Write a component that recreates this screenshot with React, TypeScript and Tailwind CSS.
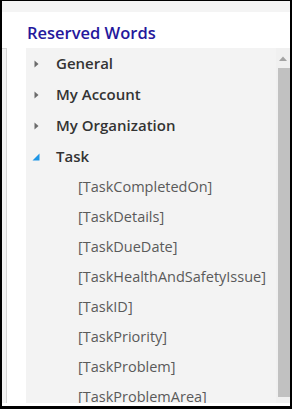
import React from 'react';

const groups = ['General', 'My Account', 'My Organization'];
const words = [
  '[TaskCompletedOn]',
  '[TaskDetails]',
  '[TaskDueDate]',
  '[TaskHealthAndSafetyIssue]',
  '[TaskID]',
  '[TaskPriority]',
  '[TaskProblem]',
  '[TaskProblemArea]',
];

const Collapsed = () => (
  <svg width="5" height="8" viewBox="0 0 5 8" className="shrink-0">
    <path d="M0.5 0.5 L4.5 4 L0.5 7.5 Z" fill="#6b6b6b" />
  </svg>
);

const Expanded = () => (
  <svg width="8" height="8" viewBox="0 0 8 8" className="shrink-0">
    <path d="M7.5 0.5 L7.5 7.5 L0.5 7.5 Z" fill="#1e96e6" />
  </svg>
);

export default function App() {
  return (
    <div
      className="w-[292px] h-[409px] bg-black pt-[1px] pl-[2px] pr-[2px] pb-[3px] overflow-hidden"
      style={{ fontFamily: '"Open Sans", "Noto Sans", sans-serif' }}
    >
      <div className="h-full bg-white flex flex-col overflow-hidden">
        <div className="h-[11px] bg-[#f4f4f4] shrink-0" />
        <div className="flex flex-1 min-h-0">
          <div className="w-[5px] shrink-0 flex flex-col">
            <div className="h-[36px]" />
            <div className="flex-1 bg-[#f2f2f2] border-t border-r border-[#d6d6d6] mb-[3px]" />
          </div>
          <div className="w-[19px] shrink-0" />
          <div className="flex-1 min-w-0 flex flex-col">
            <div className="h-[36px] shrink-0 pl-[1px] pt-[10px] text-[16.5px] leading-[22px] font-semibold text-[#25189c]">
              Reserved Words
            </div>
            <div className="flex-1 min-h-0 mb-[3px] bg-[#f3f3f3] flex overflow-hidden">
              <div className="flex-1 min-w-0 flex flex-col">
                {groups.map((g) => (
                  <div key={g} className="h-[31px] shrink-0 flex items-center pl-[8px]">
                    <Collapsed />
                    <span className="ml-[17px] text-[15px] font-semibold text-[#333333] whitespace-nowrap">{g}</span>
                  </div>
                ))}
                <div className="h-[31px] shrink-0 flex items-center pl-[6px]">
                  <Expanded />
                  <span className="ml-[16px] text-[15px] font-semibold text-[#333333]">Task</span>
                </div>
                {words.map((w) => (
                  <div key={w} className="h-[30px] shrink-0 flex items-center pl-[52px]">
                    <span className="text-[14.5px] text-[#5a5a5a] whitespace-nowrap">{w}</span>
                  </div>
                ))}
              </div>
              <div className="w-[14px] shrink-0 bg-[#f0f0f0] flex flex-col items-end">
                <div className="h-[16px] w-full flex items-center justify-center pt-[4px]">
                  <svg width="8" height="5" viewBox="0 0 8 5">
                    <path d="M0 5 L4 0.5 L8 5 Z" fill="#a3a3a3" />
                  </svg>
                </div>
                <div className="mt-[4px] w-[12px] h-[329px] bg-[#c1c1c1]" />
              </div>
            </div>
          </div>
        </div>
      </div>
    </div>
  );
}
